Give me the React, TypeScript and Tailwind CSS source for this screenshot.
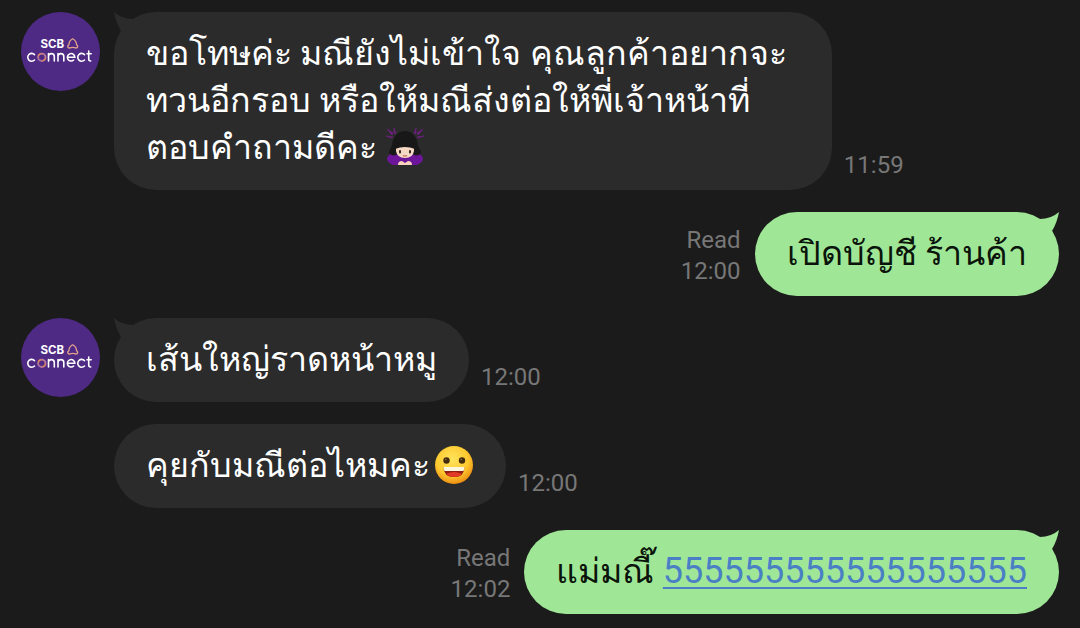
import React from 'react';

type Message = {
    id: number;
    from: 'them' | 'me';
    time: string;
    content: React.ReactNode;
    first?: boolean;
};

const Avatar: React.FC = () => (
    <svg viewBox="0 0 80 80" className="w-20 h-20 flex-shrink-0" role="img" aria-label="SCB connect">
        <defs>
            <linearGradient id="ring" x1="0" y1="1" x2="1" y2="0">
                <stop offset="0" stopColor="#8f62c4" />
                <stop offset="0.5" stopColor="#e58a5a" />
                <stop offset="1" stopColor="#a674b8" />
            </linearGradient>
        </defs>
        <circle cx="40.5" cy="39.5" r="39.5" fill="#4e2a84" />
        <text x="20.5" y="36" fontFamily="Inter, sans-serif" fontWeight="700" fontSize="11.5" fill="#fff">SCB</text>
        <path d="M52.700 26.800c-2.800 1.500-3.800 3.400-3.800 5.800-1.800 1-1.600 3.400.6 3.400 1.200 0 1.800-.6 3.200-.6s2 .6 3.200.6c2.200 0 2.400-2.400.6-3.400 0-2.400-1-4.300-3.800-5.800z" fill="none" stroke="#e3a08c" strokeWidth="1.300" />
        <g fill="none" stroke="#fff" strokeWidth="1.600" strokeLinecap="round">
            <path d="M14.500 42.600a3.900 3.900 0 1 0 0 5.400" />
            <path d="M28.500 49v-4.500a2.900 2.900 0 0 1 5.800 0v4.500M38 49v-4.500a2.900 2.900 0 0 1 5.800 0v4.500M28.500 41.500v3M38 41.500v3" />
            <path d="M47.500 45.300h7.300a3.700 3.700 0 1 0-1.200 2.700M64.500 42.600a3.900 3.900 0 1 0 0 5.400M68.700 39v8q0 2 2 2M67 41.700h4.200" />
        </g>
        <circle cx="21.800" cy="45.300" r="3.700" fill="none" stroke="url(#ring)" strokeWidth="1.900" />
    </svg>
);

const BowingEmoji: React.FC = () => (
    <svg viewBox="0 0 40 40" className="inline-block w-10 h-10 align-[-8px]" role="img" aria-label="🙇‍♀️">
        <path d="M2 2l6 4-1 2zM1 9l7 1-1 1zM9 1l2 6-2-1zM38 2l-6 4 1 2zM39 9l-7 1 1 1zM31 1l-2 6 2-1z" fill="#702082" stroke="#702082" strokeWidth="0.700" />
        <path d="M8 26Q2 28 2 32q1 4 6 6h24q5-2 6-6 0-4-6-6z" fill="#6d159a" />
        <path d="M20 4C12 4 8 11 7 18c-1 4-3 5-3 8 2 3 6 3 9 1h14c3 2 7 2 9-1 0-3-2-4-3-8-1-7-5-14-13-14z" fill="#191818" />
        <path d="M11 20q9-3 18 0v4q-1 7-9 7t-9-7z" fill="#f6d9c4" />
        <path d="M10 22q1-9 10-9t10 9q-5-2-10-2t-10 2z" fill="#191818" />
        <path d="M15 24v1.500M25 24v1.500" stroke="#332521" strokeWidth="2" strokeLinecap="round" />
        <path d="M18 28.500q2 1 4 0" stroke="#be6951" strokeWidth="1.200" fill="none" />
        <path d="M13 38q0-4 4-4l3 2 3-2q4 0 4 4z" fill="#f9d3bd" />
    </svg>
);

const GrinEmoji: React.FC = () => (
    <svg viewBox="0 0 40 40" className="ml-1 inline-block w-10 h-10 align-[-8px]" role="img" aria-label="😀">
        <defs>
            <radialGradient id="face" cx="0.45" cy="0.35" r="0.65">
                <stop offset="0" stopColor="#ffe45c" />
                <stop offset="0.65" stopColor="#fdc92f" />
                <stop offset="1" stopColor="#ed8f13" />
            </radialGradient>
        </defs>
        <circle cx="20" cy="20" r="19" fill="url(#face)" />
        <circle cx="12.500" cy="15.500" r="3.200" fill="#422b0d" />
        <circle cx="28" cy="15.500" r="3.200" fill="#422b0d" />
        <circle cx="11.700" cy="14.500" r="0.800" fill="#92724a" />
        <circle cx="27.200" cy="14.500" r="0.800" fill="#92724a" />
        <path d="M9.500 22h21q0 10-10.500 10T9.500 22z" fill="#8f1f13" />
        <path d="M12 29q8-4 16 0-3 3-8 3t-8-3z" fill="#e33b25" />
        <path d="M9.500 22h21q0 2-1 4h-19q-1-2-1-4z" fill="#fff8df" />
    </svg>
);

const Tail: React.FC<{ side: 'left' | 'right' }> = ({ side }) => (
    <svg
        viewBox="0 0 24 24"
        aria-hidden="true"
        className={`absolute top-0 w-6 h-6 ${side === 'left' ? 'left-0 text-[#2b2b2b]' : 'right-0 -scale-x-100 text-[#9fe796]'}`}
    >
        <path d="M0 0Q8 7 19 7L24 24 7 19Q2 11 0 0z" fill="currentColor" />
    </svg>
);

const messages: Message[] = [
    {
        id: 1,
        from: 'them',
        time: '11:59',
        first: true,
        content: (
            <>
                ขอโทษค่ะ มณียังไม่เข้าใจ คุณลูกค้าอยากจะทวนอีกรอบ หรือให้มณีส่งต่อให้พี่เจ้าหน้าที่ตอบคำถามดีคะ{' '}
                <BowingEmoji />
            </>
        ),
    },
    { id: 2, from: 'me', time: '12:00', content: 'เปิดบัญชี ร้านค้า' },
    { id: 3, from: 'them', time: '12:00', first: true, content: 'เส้นใหญ่ราดหน้าหมู' },
    { id: 4, from: 'them', time: '12:00', content: <>คุยกับมณีต่อไหมคะ<GrinEmoji /></> },
    {
        id: 5,
        from: 'me',
        time: '12:02',
        content: (
            <>
                แม่มณี๊{' '}
                <a href="tel:555555555555555555" className="text-[36px] text-[#4a7fc6] underline decoration-2 underline-offset-4">
                    555555555555555555
                </a>
            </>
        ),
    },
];

const MessageRow: React.FC<{ message: Message }> = ({ message }) => {
    const { from, time, content, first } = message;

    if (from === 'me') {
        return (
            <li className="flex items-end justify-end gap-[14px]">
                <div className="pb-[9px] text-right text-2xl/[31px] text-[#777777]">
                    <p>Read</p>
                    <p>{time}</p>
                </div>
                <div className="relative rounded-[42px] bg-[#9fe796] px-8 pt-[18px] pb-[19px] text-[34px]/[47px] text-[#0b140a]">
                    <Tail side="right" />
                    {content}
                </div>
            </li>
        );
    }

    return (
        <li className="flex items-start gap-[14px]">
            {first ? <Avatar /> : <div className="w-20 flex-shrink-0" />}
            <div className="flex max-w-[76%] items-end gap-3">
                <div className="relative rounded-[42px] bg-[#2b2b2b] px-8 pt-[18px] pb-[19px] text-[34px]/[47px] text-white">
                    {first && <Tail side="left" />}
                    {content}
                </div>
                <p className="flex-shrink-0 pb-[9px] text-2xl/[31px] text-[#777777]">{time}</p>
            </div>
        </li>
    );
};

const App: React.FC = () => {
    return (
        <main lang="th" className="min-h-screen bg-[#1b1b1b] pt-3 pr-[21px] pb-[14px] pl-5 font-[Roboto,sans-serif]">
            <ul className="flex flex-col gap-[22px]">
                {messages.map((message) => (
                    <MessageRow key={message.id} message={message} />
                ))}
            </ul>
        </main>
    );
};

export default App;
